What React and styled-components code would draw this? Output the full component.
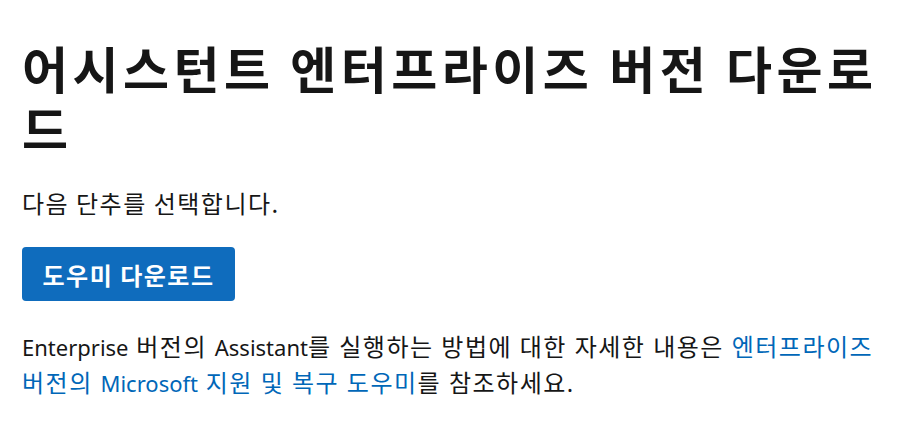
import React from 'react';
import styled, { createGlobalStyle } from 'styled-components';

const GlobalStyle = createGlobalStyle`
  html, body {
    margin: 0;
    padding: 0;
    background: #fff;
  }
  body {
    font-family: "Noto Sans", "Noto Sans CJK KR", sans-serif;
    color: #161616;
  }
`;

const Page = styled.main`
  padding: 37px 22px 0 22px;
  width: 903px;
  box-sizing: border-box;
`;

const Title = styled.h1`
  margin: 0;
  font-family: "Noto Sans CJK KR", sans-serif;
  font-size: 50px;
  font-weight: 700;
  line-height: 60px;
  letter-spacing: 4.5px;
  color: #161616;
`;

const Lead = styled.p`
  margin: 30px 0 0;
  font-family: "Noto Sans CJK KR", sans-serif;
  font-size: 24px;
  line-height: 32px;
  letter-spacing: 1.5px;
`;

const DownloadButton = styled.button`
  display: flex;
  align-items: center;
  justify-content: center;
  margin-top: 28px;
  width: 213px;
  height: 54px;
  padding: 0;
  border: none;
  border-radius: 4px;
  background: #0f6cbd;
  color: #fff;
  font-family: "Noto Sans CJK KR", sans-serif;
  font-size: 24px;
  font-weight: 700;
  letter-spacing: 1.5px;
  cursor: pointer;
`;

const Info = styled.p`
  margin: 28px 0 0;
  font-family: "Noto Sans", "Noto Sans CJK KR", sans-serif;
  font-size: 24px;
  line-height: 35px;
  letter-spacing: 1.5px;
`;

const Latin = styled.span`
  font-size: 22px;
  letter-spacing: 0;
`;

const Link = styled.a`
  color: #0067b8;
  text-decoration: none;
`;

export default function App() {
  return (
    <>
      <GlobalStyle />
      <Page>
        <Title>어시스턴트 엔터프라이즈 버전 다운로드</Title>
        <Lead>다음 단추를 선택합니다.</Lead>
        <DownloadButton>도우미 다운로드</DownloadButton>
        <Info>
          <Latin>Enterprise</Latin> 버전의 <Latin>Assistant</Latin>를 실행하는 방법에 대한 자세한 내용은{' '}
          <Link href="#">
            엔터프라이즈 버전의 <Latin>Microsoft</Latin> 지원 및 복구 도우미
          </Link>
          를 참조하세요.
        </Info>
      </Page>
    </>
  );
}
